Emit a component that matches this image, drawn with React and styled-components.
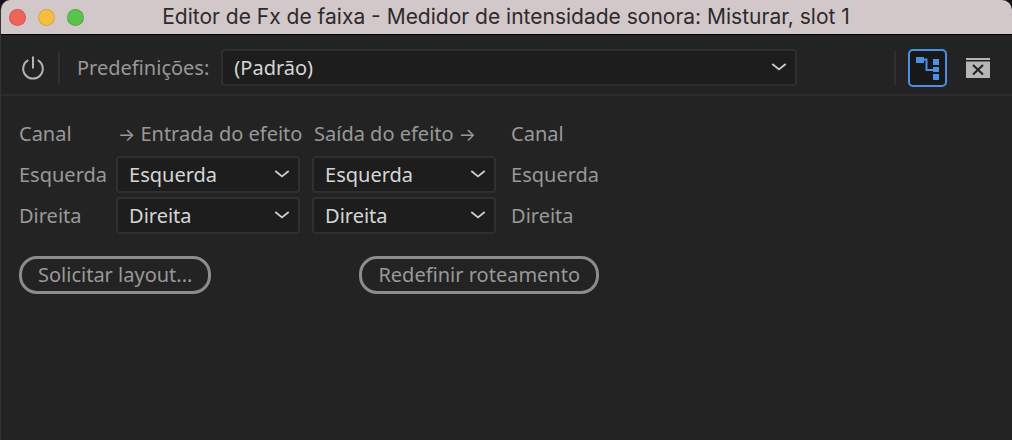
import { useCallback, useState } from 'react'
import styled, { createGlobalStyle } from 'styled-components'

const channels = ['Esquerda', 'Direita']

const replaceAt = (index, value) => (list) => list.map((item, i) => (i === index ? value : item))

const App = () => {
  const [enabled, setEnabled] = useState(true)
  const [routingVisible, setRoutingVisible] = useState(true)
  const [inputs, setInputs] = useState(channels)
  const [outputs, setOutputs] = useState(channels)

  const handleReset = useCallback(() => {
    setInputs(channels)
    setOutputs(channels)
  }, [])

  return (
    <>
      <GlobalStyle />
      <Window>
        <TitleBar>
          <Lights>
            <Light $color="#ed655a" aria-label="Fechar" />
            <Light $color="#f6be40" aria-label="Minimizar" />
            <Light $color="#5ac350" aria-label="Ampliar" />
          </Lights>
          <Title>Editor de Fx de faixa - Medidor de intensidade sonora: Misturar, slot 1</Title>
        </TitleBar>

        <Toolbar>
          <PowerButton aria-label="Ligar" aria-pressed={enabled} onClick={() => setEnabled(!enabled)}>
            <PowerIcon />
          </PowerButton>
          <Divider />
          <PresetLabel htmlFor="preset">Predefinições:</PresetLabel>
          <PresetField>
            <Dropdown id="preset" options={['(Padrão)']} />
          </PresetField>
          <Tools>
            <Divider />
            <RoutingButton
              aria-label="Roteamento"
              aria-pressed={routingVisible}
              onClick={() => setRoutingVisible(!routingVisible)}
            >
              <RoutingIcon />
            </RoutingButton>
            <IconButton aria-label="Fechar painel">
              <PanelCloseIcon />
            </IconButton>
          </Tools>
        </Toolbar>

        {routingVisible && (
          <Routing>
            <Table>
              <thead>
                <tr>
                  <Head>Canal</Head>
                  <EffectHead>
                    <Arrow>→</Arrow>
                    {' Entrada do efeito'}
                  </EffectHead>
                  <EffectHead>
                    {'Saída do efeito '}
                    <Arrow>→</Arrow>
                  </EffectHead>
                  <Head>Canal</Head>
                </tr>
              </thead>
              <tbody>
                {channels.map((channel, index) => (
                  <tr key={channel}>
                    <Cell>{channel}</Cell>
                    <Cell>
                      <Dropdown
                        aria-label={`Entrada do efeito ${channel}`}
                        options={channels}
                        value={inputs[index]}
                        onChange={(e) => setInputs(replaceAt(index, e.target.value))}
                      />
                    </Cell>
                    <Cell>
                      <Dropdown
                        aria-label={`Saída do efeito ${channel}`}
                        options={channels}
                        value={outputs[index]}
                        onChange={(e) => setOutputs(replaceAt(index, e.target.value))}
                      />
                    </Cell>
                    <Cell>{channel}</Cell>
                  </tr>
                ))}
              </tbody>
            </Table>
            <Actions>
              <PillButton>Solicitar layout...</PillButton>
              <PillButton onClick={handleReset}>Redefinir roteamento</PillButton>
            </Actions>
          </Routing>
        )}
      </Window>
    </>
  )
}

const Dropdown = ({ options, ...props }) => (
  <SelectWrapper>
    <Select {...props}>
      {options.map((option) => <option key={option}>{option}</option>)}
    </Select>
    <Chevron width="16" height="10" viewBox="0 0 16 10" aria-hidden="true">
      <path d="M1.3 2 8 7.4 14.7 2" fill="none" stroke="#cfcfcf" strokeWidth="1.8" />
    </Chevron>
  </SelectWrapper>
)

const PowerIcon = () => (
  <svg width="24" height="24" viewBox="0 0 24 24" fill="none" stroke="#b4b4b4" strokeWidth="2">
    <path d="M7.2 4.2a9.8 9.8 0 1 0 9.6 0" />
    <path d="M12 .5v12" />
  </svg>
)

const RoutingIcon = () => (
  <svg width="27" height="26" viewBox="-1 0 27 26" fill="#4b90e6">
    <path d="M1 2h8v6H1zM18 4h6v6h-6zM18 12h6v5h-6zM18 19h6v6h-6z" />
    <path d="M8 4.5h3.5V15H19" fill="none" stroke="#4b90e6" strokeWidth="2" />
  </svg>
)

const PanelCloseIcon = () => (
  <svg width="24" height="20" viewBox="0 0 24 20">
    <path d="M0 0h24v2H0zM0 3.5h24V20H0z" fill="#b6b6b6" />
    <path d="m7 7 10 9.5M17 7 7 16.5" stroke="#202020" strokeWidth="2" />
  </svg>
)

const GlobalStyle = createGlobalStyle`
  * {
    box-sizing: border-box;
  }

  body {
    margin: 0;
    background: #161314;
  }

  button, select {
    font: inherit;
  }

  button {
    padding: 0;
    border: 0;
    background: none;
    cursor: pointer;
  }
`

const Window = styled.main`
  min-height: 100vh;
  overflow: hidden;
  border-left: 1px solid #333;
  border-radius: 10px 10px 0 0;
  background: #232323;
  color: #999;
  font: 20px/28px 'Noto Sans', sans-serif;
`

const TitleBar = styled.header`
  display: grid;
  grid-template-columns: 80px 1fr 80px;
  align-items: center;
  height: 35px;
  padding: 0 9px 0 8px;
  border-bottom: 1px solid #000;
  background: #d2c8ca;
`

const Lights = styled.div`
  display: flex;
  gap: 12px;
`

const Light = styled.button`
  width: 17px;
  height: 17px;
  border: 1px solid rgba(0, 0, 0, .12);
  border-radius: 50%;
  background: ${({ $color }) => $color};
`

const Title = styled.h1`
  margin: 0;
  color: #2e2a2b;
  font: 400 21px/32px Inter, sans-serif;
  text-align: center;
  white-space: nowrap;
`

const Toolbar = styled.div`
  display: flex;
  align-items: center;
  height: 61px;
  padding: 6px 22px 0 20px;
  border-bottom: 2px solid #2c2c2c;
`

const IconButton = styled.button`
  display: grid;
  place-items: center;
`

const PowerButton = styled(IconButton)`
  margin-right: 13px;
`

const RoutingButton = styled(IconButton)`
  width: 39px;
  height: 38px;
  margin: 0 19px 0 12px;
  border: 2px solid #4b90e6;
  border-radius: 5px;
  background: #181818;
`

const Divider = styled.span`
  width: 2px;
  height: 34px;
  background: #303030;
`

const PresetLabel = styled.label`
  margin: 0 12px 0 17px;
  white-space: nowrap;
`

const PresetField = styled.div`
  flex: 0 1 576px;
`

const Tools = styled.div`
  display: flex;
  align-items: center;
  margin-left: auto;
`

const SelectWrapper = styled.div`
  position: relative;
`

const Select = styled.select`
  appearance: none;
  display: block;
  width: 100%;
  height: 37px;
  padding: 0 36px 0 11px;
  border: 2px solid #2f2f2f;
  border-radius: 4px;
  background: #1d1d1d;
  color: #d6d6d6;
`

const Chevron = styled.svg`
  position: absolute;
  top: 13px;
  right: 10px;
  pointer-events: none;
`

const Routing = styled.section`
  width: fit-content;
  padding: 18px;
`

const Table = styled.table`
  border-collapse: collapse;
`

const Head = styled.th`
  height: 40px;
  padding: 0;
  font-weight: 400;
  text-align: left;
  white-space: nowrap;

  &:last-child {
    padding-left: 3px;
  }
`

const EffectHead = styled(Head)`
  width: 196px;
  padding-left: 2px;
`

const Cell = styled.td`
  height: 41px;
  padding: 0 12px 0 0;

  &:first-child {
    padding-right: 9px;
  }

  &:last-child {
    padding: 0 0 0 3px;
  }
`

const Arrow = styled.span`
  font-family: Inter, sans-serif;
  font-size: 18px;
`

const Actions = styled.div`
  display: flex;
  justify-content: space-between;
  margin-top: 20px;
`

const PillButton = styled.button`
  height: 38px;
  padding: 0 16px;
  border: 3px solid #8c8c8c;
  border-radius: 18px;
  color: #999;
`

export default App
